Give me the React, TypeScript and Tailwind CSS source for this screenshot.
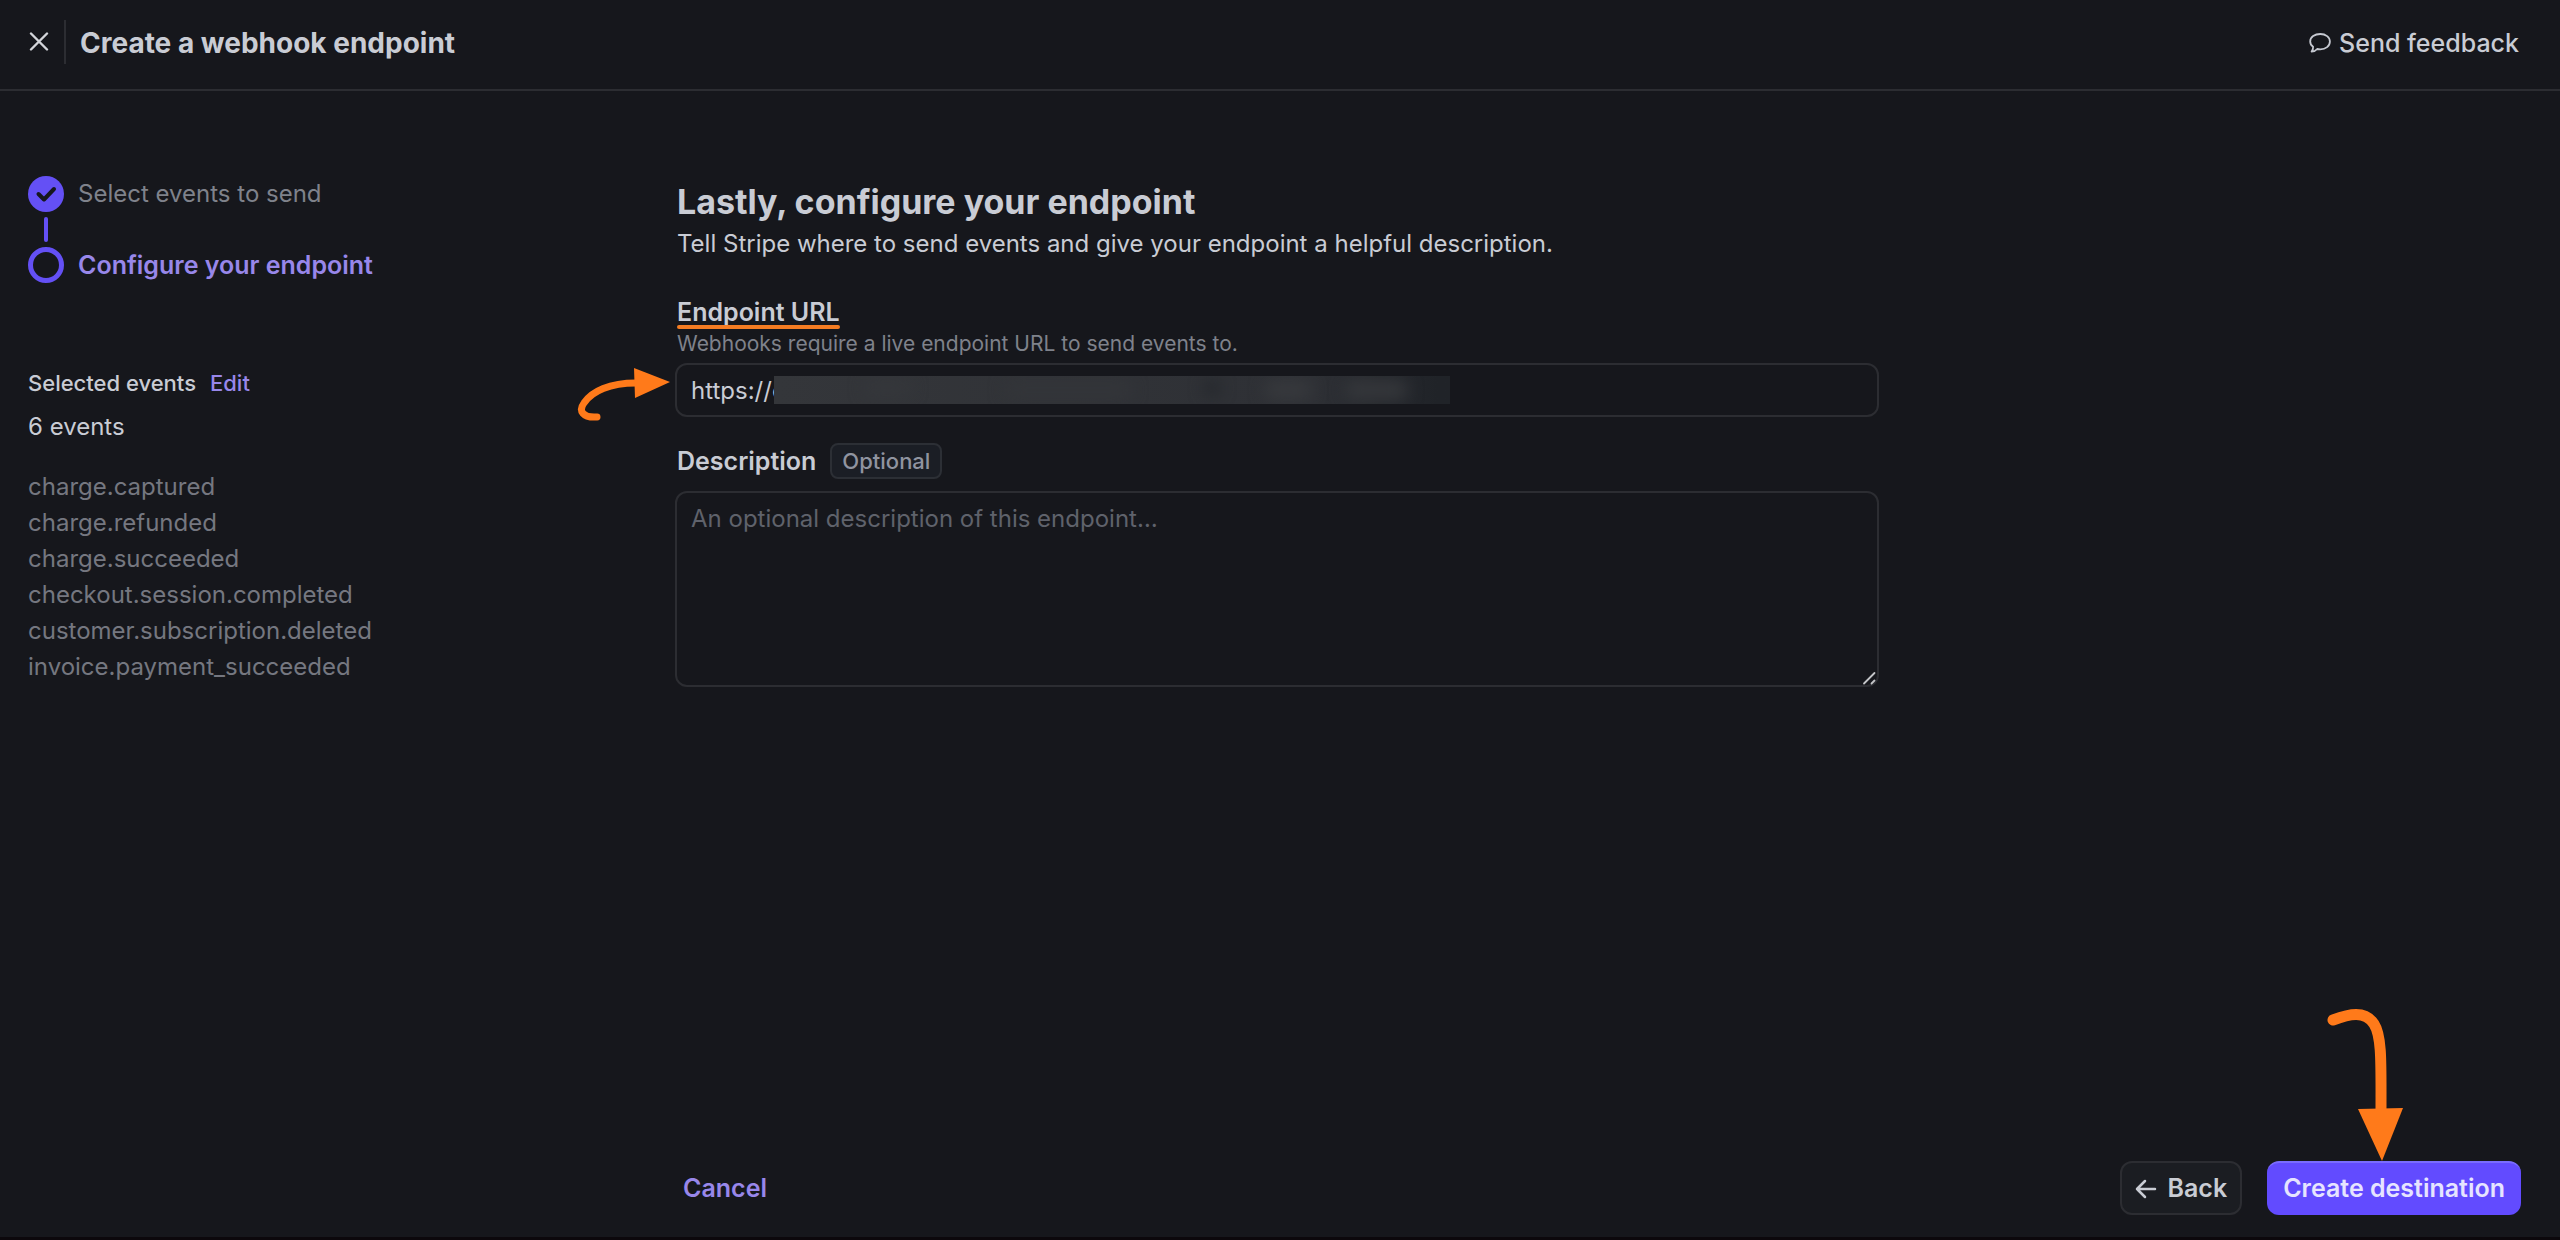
import React from "react";

const events = [
  "charge.captured",
  "charge.refunded",
  "charge.succeeded",
  "checkout.session.completed",
  "customer.subscription.deleted",
  "invoice.payment_succeeded",
];

function Header() {
  return (
    <header className="flex h-[91px] items-center border-b-2 border-[#2c2d32] pr-[41px] pb-[6px] pl-[29px]">
      <button type="button" aria-label="Close" className="flex size-5 items-center justify-center">
        <svg viewBox="0 0 20 20" className="size-5" fill="none" stroke="#d3d5da" strokeWidth="2.400" strokeLinecap="round">
          <path d="M2 1.500l16 16M18 1.500L2 17.500" />
        </svg>
      </button>
      <div className="ml-[15px] h-11 w-[2px] bg-[#2c2d32]" />
      <h1 className="ml-[14px] pt-[2px] text-[28px] leading-9 font-bold">Create a webhook endpoint</h1>
      <button type="button" className="ml-auto flex items-center gap-2 pt-[2px] text-[25px] leading-9 font-medium">
        <svg viewBox="0 0 22 20" className="h-5 w-[22px]" fill="none" stroke="#c6c9d1" strokeWidth="1.800" strokeLinejoin="round">
          <path d="M11.300 1C5.700 1 1.200 4.100 1.200 8.400c0 2.300 1.100 4.100 2.900 5.400.1 1.900-.4 3.400-1.500 4.800 2.300 0 4.200-.9 5.600-2.600 1 .2 2 .3 3.100.3 5.400 0 9.600-3.200 9.600-7.700S16.700 1 11.300 1z" />
        </svg>
        Send feedback
      </button>
    </header>
  );
}

function Sidebar() {
  return (
    <aside className="w-[647px] shrink-0 pt-[85px]">
      <ol>
        <li className="flex items-center gap-[14px] text-[24px] leading-9 text-[#7f828b]">
          <svg viewBox="0 0 36 36" className="size-9">
            <circle cx="18" cy="18" r="18" fill="#6450f5" />
            <path d="M10.500 18l5.500 5.500L26 13" fill="none" stroke="#16171c" strokeWidth="4" strokeLinecap="round" strokeLinejoin="round" />
          </svg>
          Select events to send
        </li>
        <li aria-hidden="true" className="my-[5px] ml-4 h-[25px] w-1 rounded-full bg-[#6450f5]" />
        <li aria-current="step" className="flex items-center gap-[14px] text-[25px] leading-9 font-semibold text-[#9887ea]">
          <span className="size-9 rounded-full border-[5px] border-[#6450f5]" />
          Configure your endpoint
        </li>
      </ol>
      <div className="mt-[84px] flex items-center gap-[14px] text-[22px] leading-8 font-medium">
        <h2>Selected events</h2>
        <a href="#events" className="text-[#9887ea]">Edit</a>
      </div>
      <p className="mt-[10px] text-[24px] leading-9">6 events</p>
      <ul className="mt-6 text-[24px] leading-9 text-[#757780]">
        {events.map((name) => (
          <li key={name}>{name}</li>
        ))}
      </ul>
    </aside>
  );
}

function UrlArrow() {
  return (
    <svg viewBox="0 0 94 56" className="pointer-events-none absolute top-1 -left-[98px] h-14 w-[94px]" fill="none">
      <path d="M20 50C6 51 1 44 7 36C15 24 33 16 59 16" stroke="#ff7a1a" strokeWidth="7" strokeLinecap="round" />
      <path d="M57 1L93 15L58 31z" fill="#ff7a1a" />
    </svg>
  );
}

function Form() {
  return (
    <section className="max-w-[1204px] grow pt-[88px]">
      <div className="pl-[2px]">
        <h2 className="text-[34px] leading-[45px] font-bold">Lastly, configure your endpoint</h2>
        <p className="text-[24px] leading-10">Tell Stripe where to send events and give your endpoint a helpful description.</p>
        <label htmlFor="url" className="relative mt-8 block w-fit text-[25px] leading-8 font-semibold">
          Endpoint URL
          <span className="absolute inset-x-0 top-[29px] h-1 rounded-full bg-[#f57c22]" />
        </label>
        <p id="url-hint" className="mt-[2px] text-[21px] leading-7 text-[#7f828b]">
          Webhooks require a live endpoint URL to send events to.
        </p>
      </div>
      <div className="relative mt-[5px]">
        <input
          id="url"
          type="text"
          aria-describedby="url-hint"
          defaultValue="https://c"
          className="block h-[54px] w-full rounded-xl border-2 border-[#2c2d32] bg-transparent px-[14px] text-[24px] outline-none"
        />
        <div className="pointer-events-none absolute top-[13px] left-[99px] h-7 w-[676px] overflow-hidden bg-[#16171c]">
          <div className="h-full bg-linear-to-r from-[#34363a] via-[#2e3035] via-80% to-[#202328] to-98%" />
          <div className="absolute top-1 left-[430px] h-4 w-4 rounded-full bg-[#23262b] blur-sm" />
          <div className="absolute top-1 left-[90px] h-4 w-12 rounded-full bg-[#35373b] blur-sm" />
          <div className="absolute top-1 left-[230px] h-5 w-32 rounded-full bg-[#333539] blur-sm" />
          <div className="absolute top-1 left-[490px] h-5 w-12 rounded-full bg-[#37393d] blur-sm" />
          <div className="absolute top-1 left-[570px] h-5 w-16 rounded-full bg-[#35373b] blur-sm" />
        </div>
        <UrlArrow />
      </div>
      <div className="mt-[26px] flex items-center gap-[14px] pl-[2px]">
        <label htmlFor="description" className="text-[25px] leading-9 font-semibold">Description</label>
        <span className="flex h-9 items-center rounded-lg border-2 border-[#2c2f35] bg-[#1b1e25] px-[10px] text-[22px] font-medium text-[#9094a0]">
          Optional
        </span>
      </div>
      <div className="relative mt-3">
        <textarea
          id="description"
          placeholder="An optional description of this endpoint…"
          className="block h-[196px] w-full resize-y rounded-xl border-2 border-[#2c2d32] bg-transparent px-[14px] py-2 text-[24px] leading-9 outline-none placeholder:text-[#5f626b] [&::-webkit-resizer]:bg-transparent"
        />
        <svg viewBox="0 0 14 14" className="pointer-events-none absolute right-[3px] bottom-[2px] size-[14px]" stroke="#c4c5c8" strokeWidth="1.800" strokeLinecap="round">
          <path d="M2 12.500L12.500 2M9.500 12.500l3-3" />
        </svg>
      </div>
    </section>
  );
}

function Footer() {
  return (
    <footer className="mt-auto flex items-center pr-[39px] pb-[22px] pl-[683px] text-[25px] font-semibold">
      <button type="button" className="pt-[2px] text-[#9887ea]">Cancel</button>
      <button type="button" className="ml-auto flex h-[54px] items-center gap-[10px] rounded-xl border-2 border-[#2c2d32] bg-[#1b1d22] px-[13px] pt-[2px]">
        <svg viewBox="0 0 22 20" className="h-5 w-[22px]" fill="none" stroke="currentColor" strokeWidth="2.500" strokeLinecap="round" strokeLinejoin="round">
          <path d="M10 2L2 10l8 8M2 10h18" />
        </svg>
        Back
      </button>
      <div className="relative ml-[25px]">
        <button type="button" className="h-[54px] rounded-xl border-t-2 border-[#7a6cff] bg-[#624bff] px-4 text-[#e6e4ff]">
          Create destination
        </button>
        <svg viewBox="0 0 80 156" className="pointer-events-none absolute bottom-[53px] left-[58px] h-[156px] w-20" fill="none">
          <path d="M8 14C24 8 40 4 49 18C57 30 56 58 56 106" stroke="#ff7a1a" strokeWidth="11" strokeLinecap="round" />
          <path d="M33 103L78 102L57 155z" fill="#ff7a1a" />
        </svg>
      </div>
    </footer>
  );
}

export default function App() {
  return (
    <div className="flex min-h-screen flex-col border-b-[3px] border-[#0c080c] bg-[#16171c] font-['Inter',sans-serif] text-[#c9ccd4]">
      <Header />
      <main className="flex px-7">
        <Sidebar />
        <Form />
      </main>
      <Footer />
    </div>
  );
}
